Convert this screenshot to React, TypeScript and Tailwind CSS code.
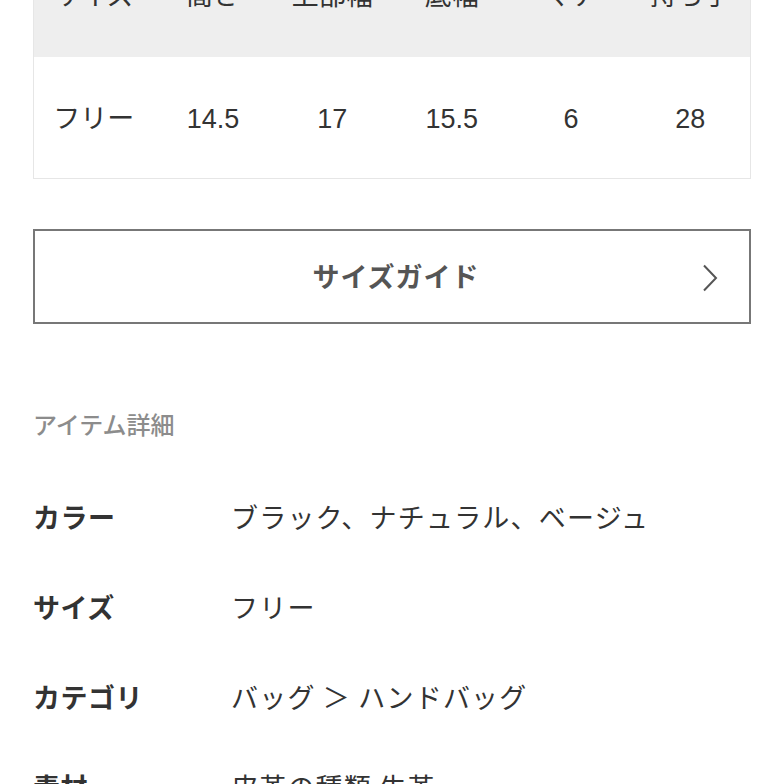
import React from "react";

const font = { fontFamily: '"Noto Sans CJK JP", "Noto Sans", sans-serif' };
const tableFont = { fontFamily: '"Liberation Sans", "Noto Sans CJK JP", sans-serif' };

export default function App() {
  const headers = ["サイズ", "高さ", "上部幅", "底幅", "マチ", "持ち手"];
  const values = ["フリー", "14.5", "17", "15.5", "6", "28"];
  const details: [string, string][] = [
    ["カラー", "ブラック、ナチュラル、ベージュ"],
    ["サイズ", "フリー"],
    ["カテゴリ", "バッグ ＞ ハンドバッグ"],
    ["素材", "皮革の種類 牛革"],
  ];
  return (
    <div className="w-[784px] h-[784px] overflow-hidden bg-white" style={font}>
      <div className="px-[33px] -mt-[65px]">
        <div className="border-x border-b border-[#e6e6e6]" style={tableFont}>
          <div className="grid grid-cols-6 h-[122px] bg-[#eeeeee] items-center text-[27px] text-[#333]">
            {headers.map((h) => (
              <div key={h} className="text-center">{h}</div>
            ))}
          </div>
          <div className="grid grid-cols-6 h-[121px] pt-[4px] bg-white items-center text-[27px] text-[#333]">
            {values.map((v, i) => (
              <div key={i} className="text-center">{v}</div>
            ))}
          </div>
        </div>
        <div className="mt-[50px] h-[95px] border-2 border-[#777] flex items-center justify-center relative">
          <span className="text-[27px] font-bold text-[#555] tracking-[1px] pl-[8px]">サイズガイド</span>
          <svg className="absolute right-[31px] top-[33px]" width="16" height="28" viewBox="0 0 16 28" fill="none">
            <path d="M2 1.5 L14 14 L2 26.5" stroke="#555" strokeWidth="2" />
          </svg>
        </div>
        <div className="mt-[84px] h-[32px] leading-[32px] text-[24px] text-[#8c8c8c] font-medium">アイテム詳細</div>
        <div className="mt-[32px]">
          {details.map(([k, v]) => (
            <div key={k} className="flex h-[90px] items-center text-[27px] text-[#333]">
              <div className="w-[198px] font-bold tracking-[0.5px]">{k}</div>
              <div className="tracking-[1.2px]">{v}</div>
            </div>
          ))}
        </div>
      </div>
    </div>
  );
}
